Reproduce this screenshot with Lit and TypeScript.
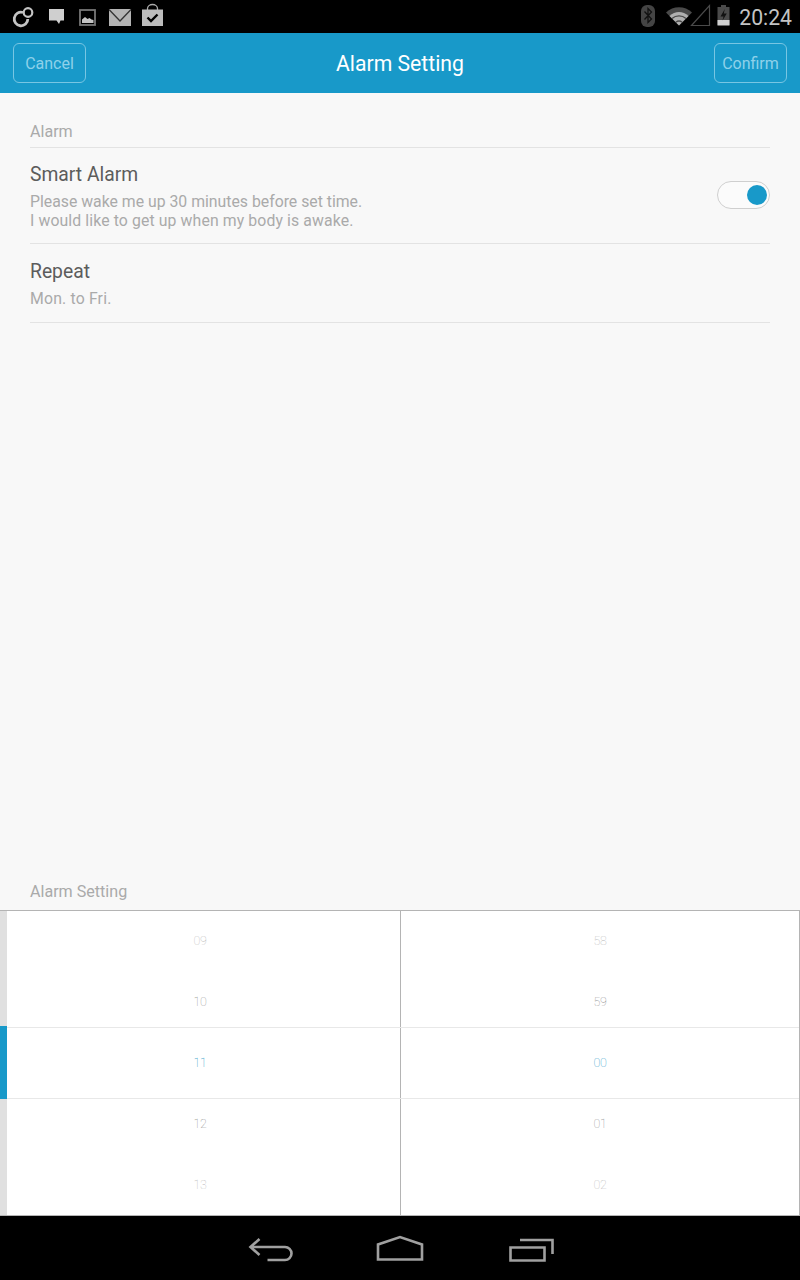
import { LitElement, html, css, svg } from "lit";
import { customElement } from "lit/decorators.js";

const left = ["09", "10", "11", "12", "13"];
const right = ["58", "59", "00", "01", "02"];
const tone = ["far", "near", "sel", "near", "far"];

@customElement("app-root")
export class AppRoot extends LitElement {
  static styles = css`
    :host { display: flex; flex-direction: column; width: 800px; height: 1280px; background: #f8f8f8; font-family: Roboto, "Liberation Sans", sans-serif; overflow: hidden; }
    .status { height: 33px; background: #000; display: flex; align-items: center; flex: none; }
    .status svg { display: block; flex: none; }
    .sys { margin-left: auto; display: flex; align-items: center; }
    .time { color: #c4c4c4; font-size: 21.2px; margin: 0 8px; line-height: 33px; position: relative; top: 1px; }
    .head { height: 60px; flex: none; background: #1899c9; display: flex; align-items: center; justify-content: space-between; padding: 0 13px; box-sizing: border-box; }
    .btn { width: 73px; height: 40px; box-sizing: border-box; border: 1px solid #78c6e3; border-radius: 6px; color: #8ed1ea; font-size: 16px; display: flex; align-items: center; justify-content: center; }
    .title { color: #fff; font-size: 21.2px; }
    .content { flex: 1; display: flex; flex-direction: column; padding: 0 30px; }
    .section { font-size: 16.1px; color: #aaa; line-height: 20px; }
    .first { padding: 29px 0 5px; border-bottom: 1px solid #e3e3e3; }
    .row { display: flex; align-items: center; justify-content: space-between; border-bottom: 1px solid #e3e3e3; box-sizing: border-box; }
    .r1 { height: 96px; }
    .r2 { height: 79px; }
    .text { padding-top: 1px; }
    .name { font-size: 19.3px; color: #5c5c5c; line-height: 24px; }
    .desc { font-size: 15.8px; color: #aaa; line-height: 19px; margin-top: 5px; }
    .wide { letter-spacing: 0.11px; }
    .wider { letter-spacing: 0.17px; }
    .toggle { width: 53px; height: 28px; box-sizing: border-box; border: 1px solid #cfcfcf; border-radius: 14px; background: #fbfbfb; display: flex; align-items: center; justify-content: flex-end; padding-right: 2px; margin-top: -2px; }
    .knob { width: 20px; height: 20px; border-radius: 50%; background: #1899c9; }
    .bottom { margin-top: auto; padding-bottom: 8px; }
    .picker { height: 306px; flex: none; display: grid; grid-template-columns: 401px 399px; background: #fff; border-top: 1px solid #b4b4b4; border-bottom: 1px solid #b4b4b4; box-sizing: border-box; position: relative; }
    .col { display: flex; flex-direction: column; border-right: 1px solid #b4b4b4; }
    .item { height: 61px; flex: none; display: flex; align-items: center; justify-content: center; font-family: Roboto, Lato, sans-serif; font-weight: 100; font-size: 12.5px; letter-spacing: -0.4px; position: relative; top: -1px; }
    .far { color: #b8b8b8; }
    .near { color: #8c8c8c; }
    .sel { color: #0f8fc4; }
    .strip { position: absolute; left: 0; top: 0; bottom: 0; width: 7px; background: #e0e0e0; }
    .strip i { display: block; height: 73px; margin-top: 115px; background: #1899c9; }
    .band { position: absolute; left: 7px; right: 1px; top: 116px; height: 72px; box-sizing: border-box; border-top: 1px solid #e8e8e8; border-bottom: 1px solid #e8e8e8; }
    .nav { height: 64px; flex: none; background: #000; }
    .nav svg { display: block; margin-left: 230px; }
  `;

  render() {
    return html`
      <div class="status">
        <svg width="170" height="33" viewBox="0 0 170 33" fill="none">
          ${svg`
            <path d="M23 12.500 A6.800 6.800 0 1 0 27.800 19" stroke="#c4c4c4" stroke-width="2.800"/>
            <circle cx="28" cy="12.500" r="4.300" stroke="#c4c4c4" stroke-width="2.200"/>
            <path d="M49 9h15v11.500h-3.500l-1.500 3.500-2.500-3.500H49z" fill="#cfcfcf"/>
            <rect x="80" y="10" width="15" height="15" stroke="#777" stroke-width="1.800"/>
            <path d="M82 23v-3.500l3-2.500 2.500 2 2-1 2 1.500 2 .5V23z" fill="#c4c4c4"/>
            <path d="M109 9h22v17h-22z" fill="#b4b4b4"/>
            <path d="M109 9.500 120 21 131 9.500" stroke="#333" stroke-width="1.300"/>
            <path d="M147.500 10V8.500a5 4 0 0 1 10 0V10" stroke="#aaa" stroke-width="1.300"/>
            <path d="M142 9.500h21V26h-21z" fill="#bcbcbc"/>
            <path d="M147.500 17.500l3.500 3.500 6.500-6.500" stroke="#000" stroke-width="2.400"/>
          `}
        </svg>
        <div class="sys">
          <svg width="95" height="33" viewBox="0 0 95 33" fill="none">
            ${svg`
              <rect x="5" y="5" width="14" height="22" rx="6" fill="#444"/>
              <path d="M8.500 11.500l7 7.500-3.500 3.500V8.500L15.500 12l-7 7.500" stroke="#111" stroke-width="1.300"/>
              <path d="M30 12.500C37 5.500 49 5.500 56 12.500L43 25.500z" fill="#4a4a4a"/>
              <path d="M33.500 16C39 10.500 47 10.500 52.500 16L43 25.500z" fill="#b0b0b0"/>
              <path d="M36 18.500C40 15 46 15 50 18.500" stroke="#4a4a4a" stroke-width="1.400"/>
              <path d="M39.800 22.200C42 20.500 44 20.500 46.200 22.200" stroke="#4a4a4a" stroke-width="1.300"/>
              <path d="M73.500 5.500V25.500H55.500z" stroke="#4a4a4a" stroke-width="1.200"/>
              <path d="M85 5h5v2h3.500v18h-12V7h3.500z" fill="#4a4a4a"/>
              <path d="M81.500 20h12v5.500h-12z" fill="#d0d0d0"/>
              <path d="M88.800 9 84.500 16.500h3l-1 4 4.300-7h-3z" fill="#111"/>
            `}
          </svg>
          <span class="time">20:24</span>
        </div>
      </div>
      <div class="head">
        <div class="btn">Cancel</div>
        <div class="title">Alarm Setting</div>
        <div class="btn">Confirm</div>
      </div>
      <div class="content">
        <div class="section first">Alarm</div>
        <div class="row r1">
          <div class="text">
            <div class="name">Smart Alarm</div>
            <div class="desc">Please wake me up 30 minutes before set time.<br><span class="wide">I would like to get up when my body is awake.</span></div>
          </div>
          <div class="toggle"><div class="knob"></div></div>
        </div>
        <div class="row r2">
          <div class="text">
            <div class="name">Repeat</div>
            <div class="desc wider">Mon. to Fri.</div>
          </div>
        </div>
        <div class="section bottom">Alarm Setting</div>
      </div>
      <div class="picker">
        <div class="col">${left.map((t, i) => html`<div class="item ${tone[i]}">${t}</div>`)}</div>
        <div class="col">${right.map((t, i) => html`<div class="item ${tone[i]}">${t}</div>`)}</div>
        <div class="strip"><i></i></div>
        <div class="band"></div>
      </div>
      <div class="nav">
        <svg width="340" height="64" viewBox="0 0 340 64" fill="none" stroke="#a0a0a0" stroke-width="2.600">
          ${svg`
            <path d="M29.500 23l-9 8 9 8M20.500 31H55a6.500 6.500 0 0 1 0 13H37.500"/>
            <path d="M148 43.500V28.500l22-7.500 22 7.500v15z"/>
            <path d="M280.500 31.500h34v13h-34zM290 24h32.500v14"/>
          `}
        </svg>
      </div>
    `;
  }
}
